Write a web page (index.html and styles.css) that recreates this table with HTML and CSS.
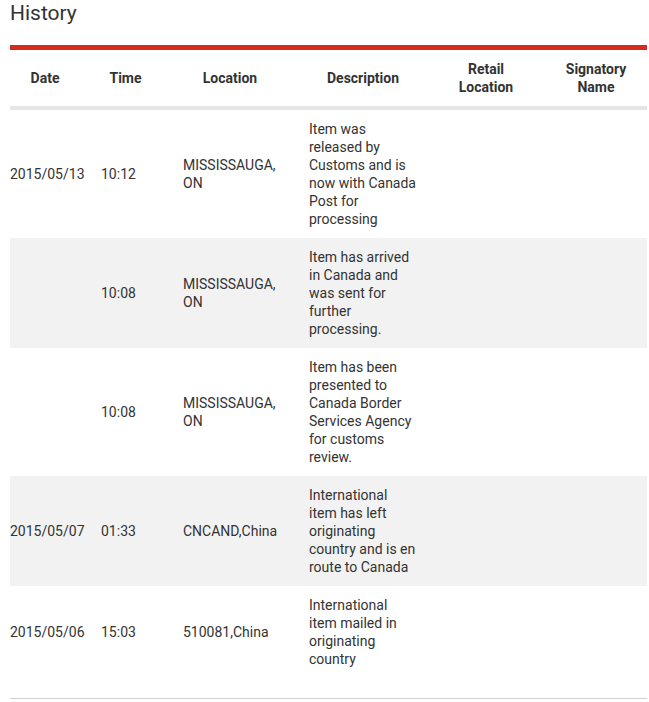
FILE: index.html
```html
<!DOCTYPE html>
<html>
<head>
<meta charset="utf-8">
<link rel="stylesheet" href="styles.css">
</head>
<body>
<div class="page">
  <h2 class="title">History</h2>
  <div class="history">
    <table class="tbl">
      <colgroup>
        <col class="c-date"><col class="c-time"><col class="c-loc"><col class="c-desc"><col class="c-retail"><col class="c-sig">
      </colgroup>
      <thead>
        <tr>
          <th class="h-date">Date</th>
          <th class="h-time">Time</th>
          <th class="h-loc">Location</th>
          <th class="h-desc">Description</th>
          <th class="h-retail">Retail<br>Location</th>
          <th class="h-sig">Signatory<br>Name</th>
        </tr>
      </thead>
      <tbody>
        <tr>
          <td>2015/05/13</td><td>10:12</td><td class="loc">MISSISSAUGA, ON</td>
          <td class="desc">Item was released by Customs and is now with Canada Post for processing</td><td></td><td></td>
        </tr>
        <tr class="alt">
          <td></td><td>10:08</td><td class="loc">MISSISSAUGA, ON</td>
          <td class="desc">Item has arrived in Canada and was sent for further processing.</td><td></td><td></td>
        </tr>
        <tr>
          <td></td><td>10:08</td><td class="loc">MISSISSAUGA, ON</td>
          <td class="desc">Item has been presented to Canada Border Services Agency for customs review.</td><td></td><td></td>
        </tr>
        <tr class="alt">
          <td>2015/05/07</td><td>01:33</td><td class="loc">CNCAND,China</td>
          <td class="desc">International item has left originating country and is en route to Canada</td><td></td><td></td>
        </tr>
        <tr>
          <td>2015/05/06</td><td>15:03</td><td class="loc">510081,China</td>
          <td class="desc">International item mailed in originating country</td><td></td><td></td>
        </tr>
      </tbody>
    </table>
  </div>
</div>
</body>
</html>
```

FILE: styles.css
```css
html, body {
  margin: 0;
  padding: 0;
  background: #fff;
}
body {
  font-family: Roboto, "Liberation Sans", Arial, sans-serif;
  color: #333;
}
.page {
  padding-left: 10px;
  width: 637px;
}
.title {
  margin: 0 0 19px 0;
  padding-top: 1px;
  font-size: 21px;
  line-height: 25px;
  font-weight: 400;
  color: #333;
}
.history {
  border-top: 5px solid #d52b1e;
  border-bottom: 1px solid #cfcfcf;
  padding-bottom: 20px;
}
.tbl {
  width: 637px;
  table-layout: fixed;
  border-collapse: collapse;
  font-size: 14px;
  line-height: 18px;
}
.c-date { width: 91px; }
.c-time { width: 82px; }
.c-loc { width: 126px; }
.c-desc { width: 121px; }
.c-retail { width: 112px; }
.c-sig { width: 105px; }
.tbl th {
  font-weight: 700;
  text-align: center;
  vertical-align: middle;
  padding: 10px 0;
  border-bottom: 4px solid #e5e5e5;
  color: #333;
}
.tbl th.h-date { padding-right: 21px; }
.tbl th.h-time { padding-right: 33px; }
.tbl th.h-loc { padding-right: 32px; }
.tbl th.h-desc { padding-right: 13px; }
.tbl th.h-sig { padding-left: 3px; }
.tbl td {
  padding: 10px 10px 10px 0;
  vertical-align: middle;
  text-align: left;
}
.tbl td.loc {
  padding-right: 22px;
}
.tbl td.desc {
  padding-right: 13px;
}
.tbl tr.alt td {
  background: #f2f2f2;
}
```
